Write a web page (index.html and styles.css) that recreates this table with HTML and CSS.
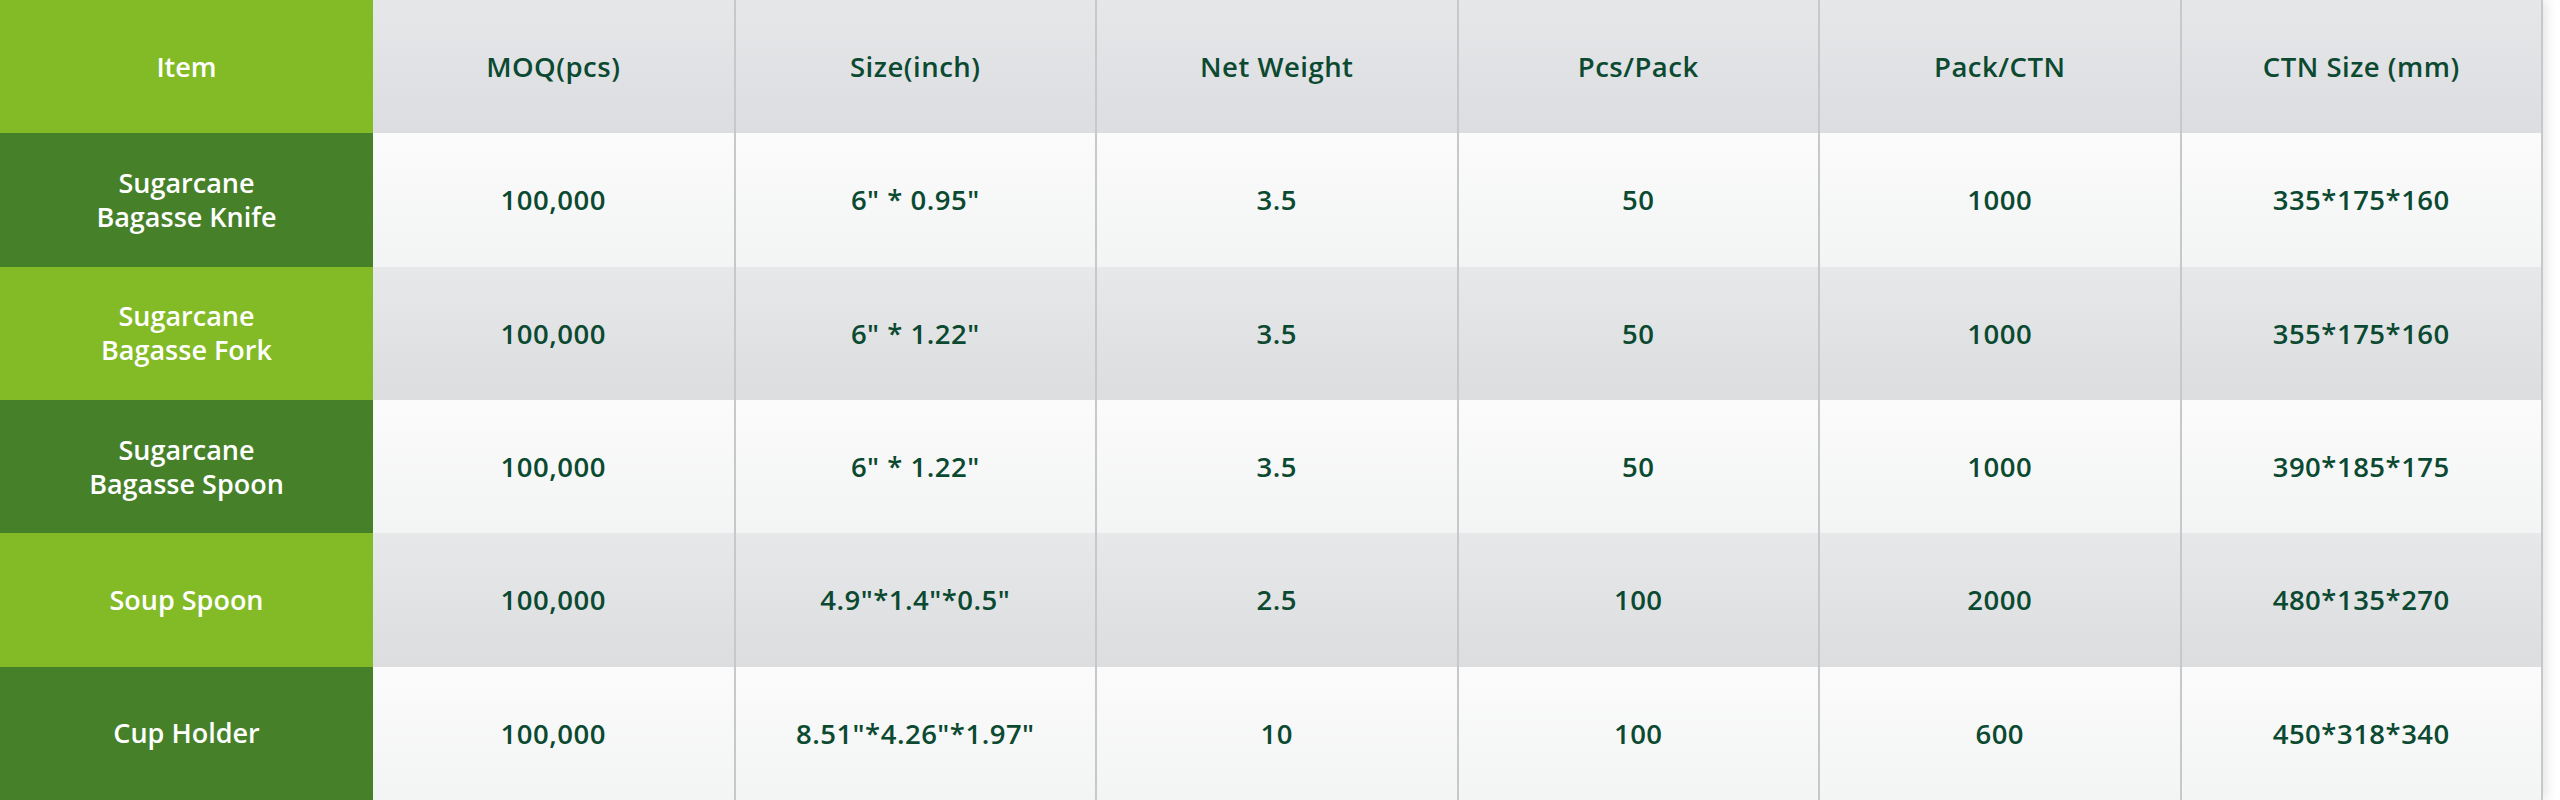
FILE: index.html
```html
<!DOCTYPE html>
<html lang="en">
<head>
<meta charset="utf-8">
<title>Sugarcane Bagasse Cutlery Specifications</title>
<link rel="stylesheet" href="styles.css">
</head>
<body>
<div class="page">
  <table class="spec">
    <colgroup>
      <col class="c-item">
      <col class="c-data"><col class="c-data"><col class="c-data">
      <col class="c-data"><col class="c-data"><col class="c-data">
    </colgroup>
    <thead>
      <tr class="row head">
        <th class="item light">Item</th>
        <th class="cell">MOQ(pcs)</th>
        <th class="cell">Size(inch)</th>
        <th class="cell">Net Weight</th>
        <th class="cell">Pcs/Pack</th>
        <th class="cell">Pack/CTN</th>
        <th class="cell">CTN Size (mm)</th>
      </tr>
    </thead>
    <tbody>
      <tr class="row odd">
        <td class="item dark">Sugarcane<br>Bagasse Knife</td>
        <td class="cell">100,000</td>
        <td class="cell">6" * 0.95"</td>
        <td class="cell">3.5</td>
        <td class="cell">50</td>
        <td class="cell">1000</td>
        <td class="cell">335*175*160</td>
      </tr>
      <tr class="row even">
        <td class="item light">Sugarcane<br>Bagasse Fork</td>
        <td class="cell">100,000</td>
        <td class="cell">6" * 1.22"</td>
        <td class="cell">3.5</td>
        <td class="cell">50</td>
        <td class="cell">1000</td>
        <td class="cell">355*175*160</td>
      </tr>
      <tr class="row odd">
        <td class="item dark">Sugarcane<br>Bagasse Spoon</td>
        <td class="cell">100,000</td>
        <td class="cell">6" * 1.22"</td>
        <td class="cell">3.5</td>
        <td class="cell">50</td>
        <td class="cell">1000</td>
        <td class="cell">390*185*175</td>
      </tr>
      <tr class="row even">
        <td class="item light">Soup Spoon</td>
        <td class="cell">100,000</td>
        <td class="cell">4.9"*1.4"*0.5"</td>
        <td class="cell">2.5</td>
        <td class="cell">100</td>
        <td class="cell">2000</td>
        <td class="cell">480*135*270</td>
      </tr>
      <tr class="row odd">
        <td class="item dark">Cup Holder</td>
        <td class="cell">100,000</td>
        <td class="cell">8.51"*4.26"*1.97"</td>
        <td class="cell">10</td>
        <td class="cell">100</td>
        <td class="cell">600</td>
        <td class="cell">450*318*340</td>
      </tr>
    </tbody>
  </table>
</div>
</body>
</html>
```

FILE: styles.css
```css
html, body {
  margin: 0;
  padding: 0;
  background: #ffffff;
}

.page {
  width: 2560px;
  height: 800px;
  overflow: hidden;
}

.spec {
  width: 2542px;
  height: 800px;
  table-layout: fixed;
  border-collapse: collapse;
  border-spacing: 0;
  box-shadow: 4px 0 10px rgba(0, 0, 0, 0.10);
  font-family: "Open Sans", "Noto Sans", sans-serif;
}

.c-item { width: 373px; }
.c-data { width: 361.5px; }

.row { height: 133.33px; }

.cell {
  padding: 0;
  text-align: center;
  vertical-align: middle;
  color: #0b4a31;
  font-size: 27.5px;
  font-weight: 600;
  letter-spacing: 0.5px;
  border-right: 2px solid #c7c8ca;
}

.head .cell {
  background: linear-gradient(#e6e7e9, #dcdde0);
}

.odd .cell {
  background: linear-gradient(#fbfbfb, #f3f4f4);
}

.even .cell {
  background: linear-gradient(#e7e8ea, #dcdddf);
}

.item {
  padding: 0;
  text-align: center;
  vertical-align: middle;
  color: #ffffff;
  font-size: 27px;
  font-weight: 600;
  line-height: 34px;
  letter-spacing: 0;
  position: relative;
  z-index: 1;
  box-shadow: 3px 0 7px rgba(0, 0, 0, 0.12);
}

.light { background: #83bb26; }
.dark { background: #46812a; }
```
